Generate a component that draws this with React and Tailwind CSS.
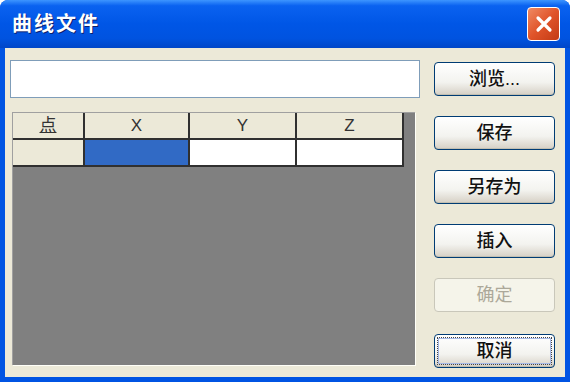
import React from "react";

const font = { fontFamily: '"Liberation Sans", "Noto Sans CJK SC", sans-serif' };

function XpButton({ label, disabled, focused }) {
  return (
    <button
      className={
        "w-[121px] h-[34px] rounded-[4px] border text-[18px] leading-none flex items-center justify-center " +
        (disabled
          ? "border-[#c9c7ba] bg-[#f5f4ea] text-[#aca899]"
          : "border-[#003c74] text-[#111] font-medium bg-[linear-gradient(#ffffff,#f3f3ef_60%,#d6d0c5)] shadow-[inset_0_-1px_0_#c2bfb2]")
      }
    >
      <span
        className={
          focused
            ? "w-[113px] h-[26px] flex items-center justify-center outline outline-1 outline-dotted outline-[#444] shadow-[inset_0_0_0_1px_#a6b9e6]"
            : ""
        }
      >
        {label}
      </span>
    </button>
  );
}

export default function App() {
  const buttons = [
    { label: "浏览..." },
    { label: "保存" },
    { label: "另存为" },
    { label: "插入" },
    { label: "确定", disabled: true },
    { label: "取消", focused: true },
  ];

  return (
    <div className="w-[570px] h-[382px] rounded-t-[8px] bg-[#0054e3] flex flex-col overflow-hidden" style={font}>
      <div className="h-[48px] flex items-center justify-between pl-[12px] pr-[10px] bg-[linear-gradient(#3d95ff_0%,#0a62f0_12%,#0056e6_50%,#0053e0_80%,#0046c8_100%)]">
        <span className="text-white font-bold text-[20px] tracking-[2px] [text-shadow:1px_1px_0_#0a1f6e]">曲线文件</span>
        <div className="w-[33px] h-[34px] rounded-[4px] border border-white bg-[linear-gradient(135deg,#f08a63,#e0542a_50%,#c33a14)] flex items-center justify-center">
          <svg width="20" height="20" viewBox="0 0 20 20">
            <path d="M4 4 L16 16 M16 4 L4 16" stroke="white" strokeWidth="3.2" strokeLinecap="round" />
          </svg>
        </div>
      </div>
      <div className="flex-1 mx-[5px] mb-[5px] bg-[#ece9d8] flex pl-[5px] pt-[12px]">
        <div className="w-[410px] flex flex-col">
          <div className="h-[38px] bg-white border border-[#7f9db9]"></div>
          <div className="mt-[14px] ml-[2px] w-[403px] h-[253px] bg-[#808080] border-l border-t border-[#a0a0a0] shadow-[1px_1px_0_#fffff8]">
            <div className="w-[391px] text-[17px] text-[#333]">
              <div className="flex h-[27px] border-b-2 border-[#303030]">
                <div className="w-[72px] flex items-center justify-center bg-[#ece9d8] border-r-2 border-[#303030] underline">点</div>
                <div className="w-[105px] flex items-center justify-center bg-[#ece9d8] border-r-2 border-[#303030]">X</div>
                <div className="w-[107px] flex items-center justify-center bg-[#ece9d8] border-r-2 border-[#303030]">Y</div>
                <div className="flex-1 flex items-center justify-center bg-[#ece9d8] border-r-2 border-[#303030]">Z</div>
              </div>
              <div className="flex h-[27px] border-b-2 border-[#303030]">
                <div className="w-[72px] bg-[#ece9d8] border-r-2 border-[#303030]"></div>
                <div className="w-[105px] bg-[#316ac5] border-r-2 border-[#303030]"></div>
                <div className="w-[107px] bg-white border-r-2 border-[#303030]"></div>
                <div className="flex-1 bg-white border-r-2 border-[#303030]"></div>
              </div>
            </div>
          </div>
        </div>
        <div className="ml-[14px] pt-[2px] flex flex-col gap-[20px]">
          {buttons.slice(0, 5).map((b) => (
            <XpButton key={b.label} {...b} />
          ))}
          <div className="mt-[2px]">
            <XpButton {...buttons[5]} />
          </div>
        </div>
      </div>
    </div>
  );
}
